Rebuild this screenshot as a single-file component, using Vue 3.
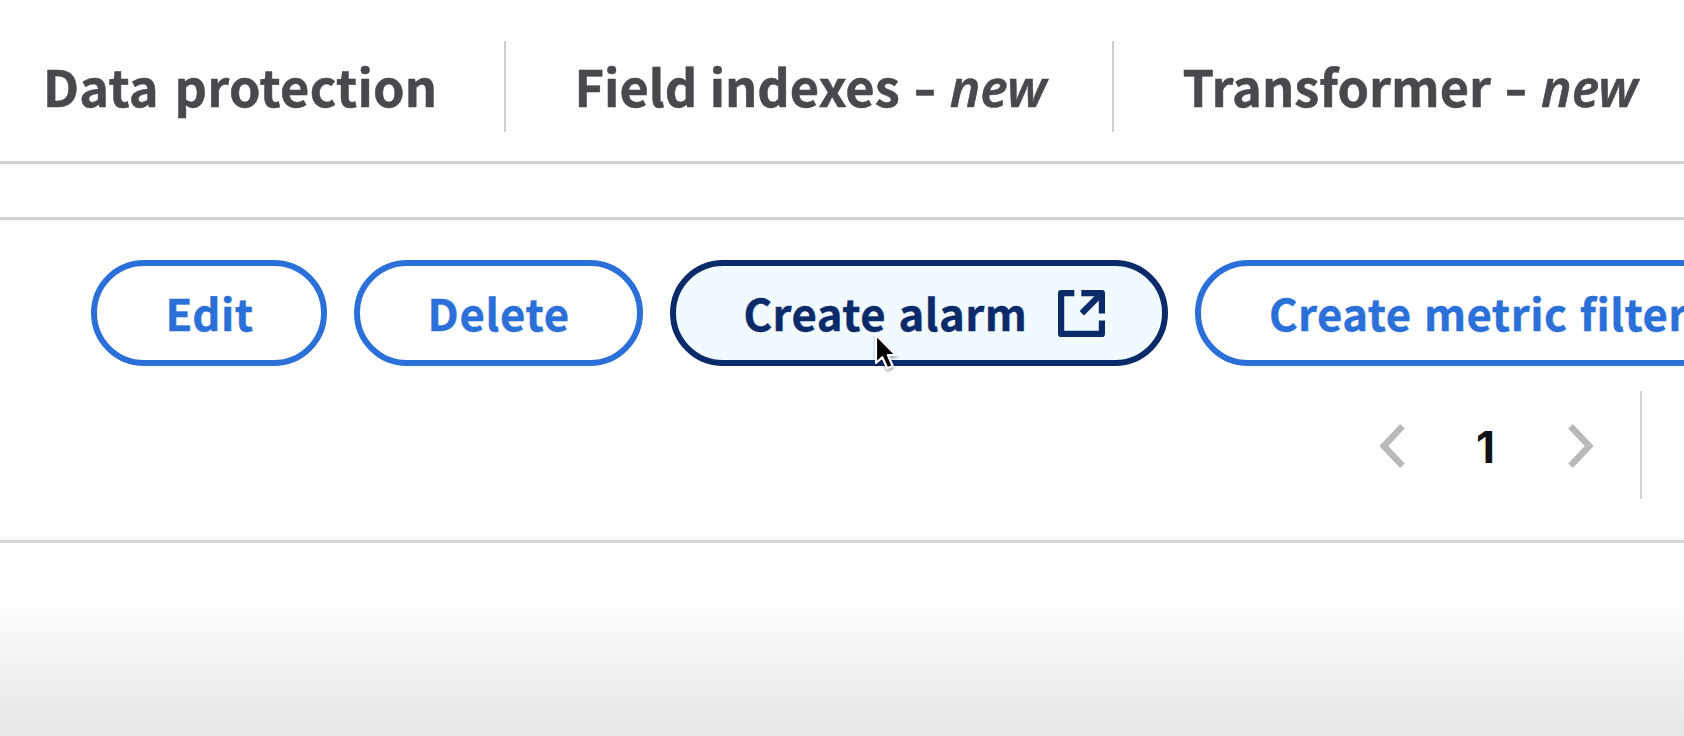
<script setup>
const tabs = [
  { id: 'protect', label: 'Data protection' },
  { id: 'fields', label: 'Field indexes', badge: 'new' },
  { id: 'transformer', label: 'Transformer', badge: 'new' }
]
</script>

<template>
  <main class="page">
    <nav class="tabs">
      <a v-for="tab in tabs" :key="tab.id" class="tab" :class="tab.id">
        <span class="label">{{ tab.label }}</span>
        <template v-if="tab.badge">
          <span class="dash">-</span>
          <em>{{ tab.badge }}</em>
        </template>
      </a>
    </nav>
    <div class="gap-strip"></div>
    <section class="toolbar">
      <div class="actions">
        <button class="btn edit"><span>Edit</span></button>
        <button class="btn delete"><span>Delete</span></button>
        <button class="btn alarm">
          <span>Create alarm</span>
          <svg class="external" viewBox="0 0 47 47" fill="none" stroke="currentColor" stroke-width="6.2" stroke-linejoin="round">
            <path d="M16.3 3.1H3.1V43.9H43.9V30.5" />
            <path d="M23.3 3.1H43.9V23.4" />
            <path d="M43 4L23.8 23.3" />
          </svg>
          <svg class="cursor" viewBox="0 0 28 40">
            <path d="M4 3V31L10.3 25.2L15.3 36.3L20.7 34L15.8 23H23.8Z" fill="#000" stroke="#fff" stroke-width="2.2" stroke-linejoin="round" />
          </svg>
        </button>
        <button class="btn metric"><span>Create metric filter</span></button>
      </div>
      <div class="pager">
        <svg class="chevron" viewBox="0 0 25 44"><path d="M22.5 2.3L3.8 22L22.5 41.7" /></svg>
        <b>1</b>
        <svg class="chevron" viewBox="0 0 25 44"><path d="M2.5 2.3L21.2 22L2.5 41.7" /></svg>
        <i class="rule"></i>
      </div>
    </section>
    <div class="shade"></div>
  </main>
</template>

<style>
body { margin: 0; overflow: hidden; }
</style>

<style scoped>
.page {
  width: 1684px;
  height: 736px;
  overflow: hidden;
  display: flex;
  flex-direction: column;
  background: #fefefe;
  font-family: "Noto Sans CJK SC", "Noto Sans", sans-serif;
  font-weight: 700;
  white-space: nowrap;
}
.tabs {
  box-sizing: border-box;
  height: 164px;
  padding-top: 41px;
  display: flex;
  border-bottom: 3px solid #d3d3d4;
}
.tab {
  box-sizing: border-box;
  height: 91px;
  flex: none;
  display: flex;
  align-items: baseline;
  color: #49494d;
  font-size: 50.5px;
  line-height: 89px;
  border-right: 2px solid #cdcdce;
  -webkit-text-stroke: 0.5px currentColor;
}
.dash { width: 20px; margin-left: 15px; text-align: center; transform: scaleX(1.25); }
.tab em {
  margin-left: 15px;
  font-family: "Noto Sans", sans-serif;
  font-weight: 600;
  font-style: italic;
  font-size: 51.5px;
}
.protect { width: 506px; padding-left: 43px; letter-spacing: 0.25px; word-spacing: 4px; }
.fields { width: 608px; padding-left: 68.5px; word-spacing: 1px; }
.transformer { width: 600px; padding-left: 68.5px; border-right: 0; }
.gap-strip { height: 53px; border-bottom: 3px solid #d3d3d4; }
.toolbar {
  box-sizing: border-box;
  height: 323px;
  padding-top: 40px;
  border-bottom: 3px solid #d6d6d7;
}
.actions { display: flex; gap: 27px; padding-left: 91px; }
.btn {
  position: relative;
  box-sizing: border-box;
  flex: none;
  height: 106px;
  padding: 0 0 3px 68px;
  display: flex;
  align-items: center;
  border: 6px solid #2b70d9;
  border-radius: 53px;
  background: #fefefe;
  color: #2b70d9;
  font: inherit;
  font-size: 43.7px;
  line-height: 90px;
  letter-spacing: 0.45px;
  word-spacing: 2px;
  -webkit-text-stroke: 0.4px currentColor;
}
.edit { width: 235.5px; padding-left: 68.5px; letter-spacing: 0.5px; }
.delete { width: 289px; letter-spacing: 0.7px; }
.alarm { width: 498.5px; background: #f1fbff; color: #0b2a69; border-color: #0b2a69; }
.metric { width: 640px; }
.external { width: 47px; height: 47px; margin: 3px 0 0 31px; }
.cursor { position: absolute; left: 196.5px; top: 66px; width: 28px; height: 40px; filter: drop-shadow(0 2px 1.5px rgba(0, 0, 0, .35)); }
.pager {
  display: flex;
  align-items: center;
  height: 108px;
  margin-top: 25px;
  padding-left: 1380px;
}
.chevron { width: 25px; height: 44px; margin-top: 2px; fill: none; stroke: #b9b9ba; stroke-width: 6.5; }
.pager b { width: 161px; margin-right: 2px; padding-top: 4px; text-align: center; font-family: Inter, sans-serif; font-weight: 700; font-size: 44px; color: #101114; }
.rule { width: 2px; height: 108px; margin-left: 47px; background: #d3d3d4; }
.shade { flex: 1; background: linear-gradient(#fefefe 0, #fefefe 58px, #f6f6f6 98px, #ededed 150px, #e6e6e6 194px); }
</style>
